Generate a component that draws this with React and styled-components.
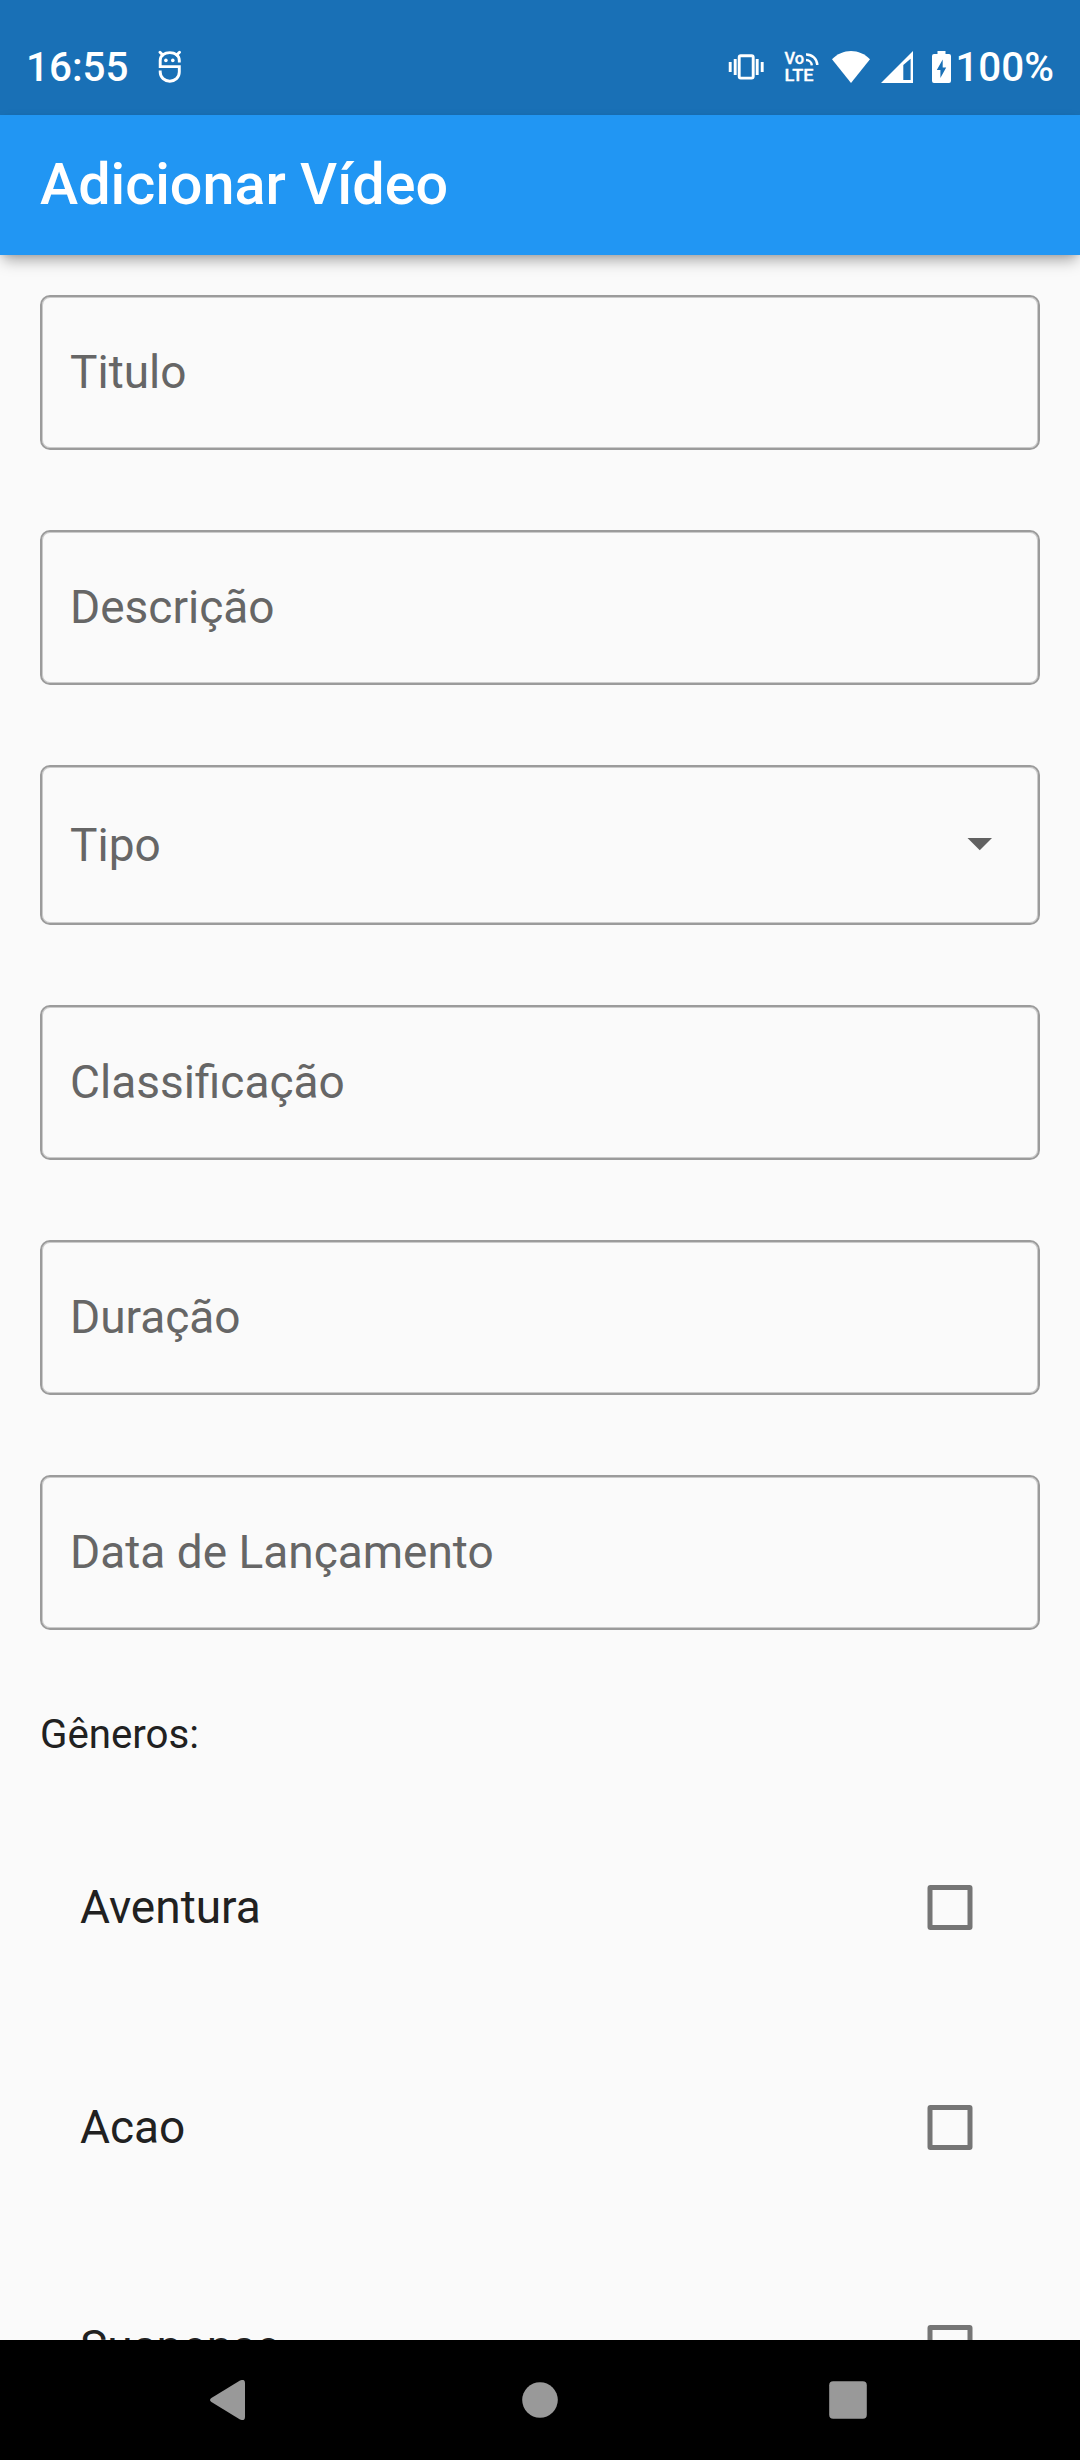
import React from "react";
import styled, { createGlobalStyle } from "styled-components";

const GlobalStyle = createGlobalStyle`
  body {
    margin: 0;
    background: #fafafa;
    font-family: Roboto, "Noto Sans", sans-serif;
  }
  * { box-sizing: border-box; }
`;

const Screen = styled.div`
  display: flex;
  flex-direction: column;
  width: 1080px;
  height: 2460px;
  overflow: hidden;
  background: #fafafa;
`;

const StatusBar = styled.header`
  display: flex;
  align-items: center;
  flex: none;
  height: 115px;
  padding: 19px 26px 0 26px;
  background: #1970b6;
  color: #fff;
`;

const StatusText = styled.span`
  padding-top: 2px;
  font-size: 40.4px;
  font-weight: 500;
  line-height: 48px;
`;

const StatusIcon = styled.svg`
  display: block;
  flex: none;
  margin-left: ${(p) => p.$gap}px;
  color: #fff;
`;

const StatusIcons = styled.div`
  display: flex;
  align-items: center;
  margin-left: auto;
  margin-right: 4px;
`;

const AppBar = styled.div`
  display: flex;
  align-items: center;
  flex: none;
  height: 140px;
  padding: 0 40px 2px;
  background: #2196f3;
  box-shadow: 0 8px 14px -3px rgba(0, 0, 0, 0.34), 0 2px 6px -2px rgba(0, 0, 0, 0.12);
  z-index: 1;
`;

const Title = styled.h1`
  margin: 0;
  color: #fff;
  font-size: 57.5px;
  font-weight: 500;
`;

const Content = styled.main`
  flex: 1;
  min-height: 0;
  overflow: hidden;
  padding: 40px 40px 0;
`;

const Fields = styled.div`
  display: flex;
  flex-direction: column;
  gap: 80px;
`;

const Field = styled.div`
  display: flex;
  align-items: center;
  justify-content: space-between;
  height: ${(p) => (p.$select ? 160 : 155)}px;
  padding: 0 46px ${(p) => (p.$select ? 0 : 2)}px 28px;
  border: 2px solid #9b9b9b;
  border-radius: 10px;
  box-shadow: inset 0 0 0 1px #cbcbcb;
`;

const Label = styled.span`
  color: #666;
  font-size: 46px;
  line-height: 54px;
`;

const Arrow = styled.svg`
  display: block;
  width: 25px;
  height: 14px;
`;

const GroupLabel = styled.div`
  height: 46px;
  margin: 81px 0 40px;
  color: #212121;
  font-size: 40.25px;
  line-height: 47px;
`;

const CheckRow = styled.label`
  display: flex;
  align-items: center;
  justify-content: space-between;
  height: 220px;
  padding: 0 67px 0 40px;
`;

const CheckText = styled.span`
  color: #212121;
  font-size: 46px;
  line-height: 54px;
`;

const CheckMarkBox = styled.svg`
  display: block;
  width: 46px;
  height: 45px;
`;

const NavBar = styled.nav`
  display: flex;
  align-items: center;
  flex: none;
  height: 120px;
  padding-left: 209px;
  background: #000;
`;

const NavIcon = styled.svg`
  display: block;
  flex: none;
  margin-left: ${(p) => p.$gap || 0}px;
  fill: #999;
`;

const fields = [
  { label: "Titulo" },
  { label: "Descrição" },
  { label: "Tipo", select: true },
  { label: "Classificação" },
  { label: "Duração" },
  { label: "Data de Lançamento" },
];

const genres = ["Aventura", "Acao", "Suspense"];

function DebugIcon() {
  return (
    <StatusIcon $gap={30} width="24" height="34" viewBox="0 0 24 34" fill="none" stroke="currentColor" strokeWidth="2.9">
      <path d="M21.3 12.4V10.5C21.3 5.5 17 2.6 11.8 2.6S2.2 5.5 2.2 10.5V16.6H21.3V22C21.3 27.5 17 31.2 11.8 31.2S2.2 27.5 2.2 22V20.6" />
      <path d="M4.8 5L2 2.2M18.7 5L21.5 2.2" strokeLinecap="round" />
      <circle cx="7.9" cy="10.4" r="1.8" fill="currentColor" stroke="none" />
      <circle cx="14.8" cy="10.4" r="1.8" fill="currentColor" stroke="none" />
    </StatusIcon>
  );
}

function VibrateIcon() {
  return (
    <StatusIcon $gap={0} width="36" height="26" viewBox="0 0 36 26" fill="none" stroke="currentColor" strokeWidth="2.9">
      <rect x="11.2" y="1.7" width="14" height="22.4" rx="1.6" />
      <path d="M2.2 8V18M7.2 5V21M34.2 8V18M29.2 5V21" />
    </StatusIcon>
  );
}

function VolteIcon() {
  return (
    <StatusIcon $gap={20} width="40" height="44" viewBox="0 0 40 44" fill="currentColor" fontFamily="Roboto, sans-serif" fontWeight="500">
      <text x="0.6" y="19" fontSize="16.2" textLength="19.6" lengthAdjust="spacingAndGlyphs" stroke="currentColor" strokeWidth="0.3">Vo</text>
      <text x="0.6" y="36.4" fontSize="17.4" textLength="29" lengthAdjust="spacingAndGlyphs" stroke="currentColor" strokeWidth="0.3">LTE</text>
      <path d="M22 9.5A11 10.8 0 0 1 33.3 20M22 15A5.8 5.6 0 0 1 27.8 20.4" fill="none" stroke="currentColor" strokeWidth="2.4" />
    </StatusIcon>
  );
}

function WifiIcon() {
  return (
    <StatusIcon $gap={8} width="38" height="32" viewBox="0 0 38 32" fill="currentColor">
      <path d="M19 32L0 8.3C5 3 12 0 19 0S33 3 38 8.3Z" />
    </StatusIcon>
  );
}

function SignalIcon() {
  return (
    <StatusIcon $gap={11} width="32" height="32" viewBox="0 0 32 32" fill="currentColor">
      <path fillRule="evenodd" d="M0 32L32 0V32ZM22.3 14V29H29.6V7.8Z" />
    </StatusIcon>
  );
}

function BatteryIcon() {
  return (
    <StatusIcon $gap={19} width="19" height="32" viewBox="0 0 19 32" fill="currentColor">
      <path fillRule="evenodd" d="M5.5 0H13.5V3H17A2 2 0 0 1 19 5V30A2 2 0 0 1 17 32H2A2 2 0 0 1 0 30V5A2 2 0 0 1 2 3H5.5ZM10.7 8.5L4.8 19H8.4V27L14.2 16.6H10.7Z" />
    </StatusIcon>
  );
}

export default function App() {
  return (
    <>
      <GlobalStyle />
      <Screen>
        <StatusBar>
          <StatusText>16:55</StatusText>
          <DebugIcon />
          <StatusIcons>
            <VibrateIcon />
            <VolteIcon />
            <WifiIcon />
            <SignalIcon />
            <BatteryIcon />
          </StatusIcons>
          <StatusText>100%</StatusText>
        </StatusBar>
        <AppBar>
          <Title>Adicionar Vídeo</Title>
        </AppBar>
        <Content>
          <Fields>
            {fields.map((f) => (
              <Field key={f.label} $select={f.select}>
                <Label>{f.label}</Label>
                {f.select && (
                  <Arrow viewBox="0 0 25 14">
                    <path d="M0.5 0H25L12.75 12.3Z" fill="#616161" />
                  </Arrow>
                )}
              </Field>
            ))}
          </Fields>
          <GroupLabel>Gêneros:</GroupLabel>
          {genres.map((g) => (
            <CheckRow key={g}>
              <CheckText>{g}</CheckText>
              <CheckMarkBox viewBox="0 0 46 45">
                <rect x="3" y="2.5" width="40" height="40" rx="0.5" fill="none" stroke="#757575" strokeWidth="5" strokeLinejoin="round" />
              </CheckMarkBox>
            </CheckRow>
          ))}
        </Content>
        <NavBar>
          <NavIcon width="36" height="40" viewBox="0 0 36 40">
            <path d="M31 0.6Q36 -1.6 36 3V37Q36 41.6 31 39.4L2.4 22Q-0.4 20 2.4 18Z" />
          </NavIcon>
          <NavIcon $gap={277} width="36" height="36" viewBox="0 0 36 36">
            <circle cx="18" cy="18" r="17.8" />
          </NavIcon>
          <NavIcon $gap={271} width="38" height="38" viewBox="0 0 38 38">
            <rect x="0.2" y="0.2" width="37.6" height="37.6" rx="4" />
          </NavIcon>
        </NavBar>
      </Screen>
    </>
  );
}
